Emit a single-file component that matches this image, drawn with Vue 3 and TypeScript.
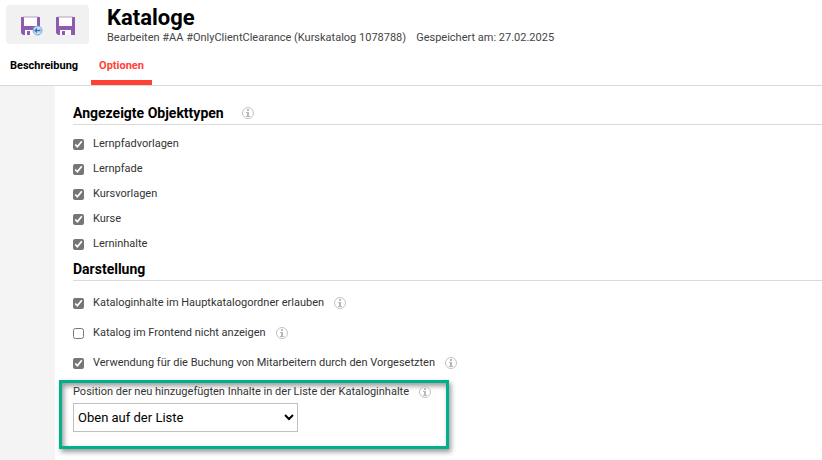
<script setup lang="ts">
import { ref, h } from 'vue'

interface Option {
  id: string
  label: string
  checked: boolean
}

const objectTypes = ref<Option[]>([
  { id: 'path-templates', label: 'Lernpfadvorlagen', checked: true },
  { id: 'paths', label: 'Lernpfade', checked: true },
  { id: 'course-templates', label: 'Kursvorlagen', checked: true },
  { id: 'courses', label: 'Kurse', checked: true },
  { id: 'contents', label: 'Lerninhalte', checked: true },
])

const displayOptions = ref<Option[]>([
  { id: 'root-contents', label: 'Kataloginhalte im Hauptkatalogordner erlauben', checked: true },
  { id: 'hide-frontend', label: 'Katalog im Frontend nicht anzeigen', checked: false },
  { id: 'manager-booking', label: 'Verwendung für die Buchung von Mitarbeitern durch den Vorgesetzten', checked: true },
])

const position = ref('top')

const InfoIcon = () =>
  h('svg', { class: 'info', width: 12, height: 12, viewBox: '0 0 12 12', 'aria-hidden': 'true' }, [
    h('circle', { cx: 6, cy: 6, r: 5.5, fill: 'none', stroke: '#c2c2c2' }),
    h('path', { d: 'M5 2h2v2H5zM4 5h3v4h1v1H4V9h1V6H4z', fill: '#b8b8b8' }),
  ])
</script>

<template>
  <div class="page">
    <header class="header">
      <div class="toolbar">
        <button type="button" class="tool" aria-label="Speichern und zurück">
          <svg width="22" height="22" viewBox="0 0 22 22">
            <path d="M0 1h19v18H2L0 17z" fill="#8e5bb0" />
            <path d="M3 1h13v9H3z" fill="#fff" />
            <path d="M2 0.500h15v1H2z" fill="#b99fcb" />
            <path d="M4 14h11v5H4z" fill="#fff" />
            <path d="M6 15h3v4H6z" fill="#8e5bb0" />
            <circle cx="16.500" cy="14.500" r="4.500" fill="#c5def2" stroke="#7ba8d3" />
            <path d="M13 14.500l3-2.700v1.900h3.500v1.600H16v1.900z" fill="#3d77b3" />
          </svg>
        </button>
        <button type="button" class="tool" aria-label="Speichern">
          <svg width="22" height="22" viewBox="0 0 22 22">
            <path d="M0 1h19v18H2L0 17z" fill="#8e5bb0" />
            <path d="M3 1h13v9H3z" fill="#fff" />
            <path d="M2 0.500h15v1H2z" fill="#b99fcb" />
            <path d="M4 14h11v5H4z" fill="#fff" />
            <path d="M6 15h3v4H6z" fill="#8e5bb0" />
          </svg>
        </button>
      </div>
      <div class="heading">
        <h1>Kataloge</h1>
        <p class="meta">
          <span>Bearbeiten #AA #OnlyClientClearance (Kurskatalog 1078788)</span>
          <span>Gespeichert am: 27.02.2025</span>
        </p>
      </div>
    </header>

    <nav class="tabs">
      <a href="#beschreibung" class="tab">Beschreibung</a>
      <a href="#optionen" class="tab active" aria-current="page">Optionen</a>
    </nav>

    <div class="body">
      <aside class="rail"></aside>
      <main class="content">
        <section>
          <h2>Angezeigte Objekttypen <InfoIcon /></h2>
          <div class="options types">
            <div v-for="o in objectTypes" :key="o.id" class="option">
              <input :id="o.id" v-model="o.checked" type="checkbox" />
              <label :for="o.id">{{ o.label }}</label>
            </div>
          </div>
        </section>
        <section>
          <h2>Darstellung</h2>
          <div class="options display">
            <div v-for="o in displayOptions" :key="o.id" class="option">
              <input :id="o.id" v-model="o.checked" type="checkbox" />
              <label :for="o.id">{{ o.label }}</label>
              <InfoIcon />
            </div>
          </div>
          <div class="highlight">
            <div class="field-label">
              <label for="position">Position der neu hinzugefügten Inhalte in der Liste der Kataloginhalte</label>
              <InfoIcon />
            </div>
            <select id="position" v-model="position">
              <option value="top">Oben auf der Liste</option>
              <option value="bottom">Unten auf der Liste</option>
            </select>
          </div>
        </section>
      </main>
    </div>
  </div>
</template>

<style>
body {
  margin: 0;
  background: #fff;
}
</style>

<style scoped>
.page {
  display: flex;
  flex-direction: column;
  min-height: 100vh;
  box-sizing: border-box;
  font-family: Roboto, "Liberation Sans", sans-serif;
  font-size: 11px;
  line-height: 14px;
  color: #333;
}
.header {
  display: flex;
  gap: 18px;
  padding: 5px 6px 0;
}
.toolbar {
  display: flex;
  gap: 13px;
  box-sizing: border-box;
  height: 39px;
  padding: 11px 11px 0 15px;
  border-radius: 4px;
  background: #f1f1f1;
}
.tool {
  width: 22px;
  height: 22px;
  padding: 0;
  border: 0;
  background: none;
}
.tool svg {
  display: block;
}
h1 {
  margin: 0;
  font-size: 22px;
  line-height: 26px;
  font-weight: 700;
  color: #000;
}
.meta {
  display: flex;
  gap: 10px;
  margin: 0;
  color: #444;
}
.tabs {
  display: flex;
  gap: 5px;
  padding: 0 2px;
  border-bottom: 1px solid #dadada;
}
.tab {
  box-sizing: border-box;
  height: 40px;
  padding: 14px 8px 0;
  border-bottom: 5px solid transparent;
  font-weight: 700;
  color: #000;
  text-decoration: none;
}
.tab.active {
  border-bottom-color: #ff4136;
  color: #ff4136;
}
.body {
  display: flex;
  flex: 1;
}
.rail {
  flex: 0 0 55px;
  background: #f4f4f4;
}
.content {
  flex: 1;
  padding: 17px 0 11px 18px;
}
h2 {
  display: flex;
  align-items: center;
  gap: 18px;
  margin: 0;
  padding-bottom: 1px;
  border-bottom: 1px solid #dadada;
  font-size: 14px;
  line-height: 20px;
  font-weight: 700;
  color: #000;
}
.options {
  display: flex;
  flex-direction: column;
}
.types {
  gap: 11px;
  padding: 12px 0 8px;
}
.display {
  gap: 16px;
  padding: 15px 0 10px;
}
.option {
  display: flex;
  align-items: center;
}
.option input {
  width: 11px;
  height: 11px;
  margin: 1px 9px 0 0;
  accent-color: #767676;
}
.info {
  display: block;
  flex: none;
}
.option .info,
.field-label .info {
  margin-left: 10px;
}
.highlight {
  box-sizing: border-box;
  width: 390px;
  max-width: 100%;
  margin-left: -14px;
  padding: 2px 11px 14px;
  border: 3px solid #00b08c;
  box-shadow: 2px 3px 5px rgba(0, 0, 0, 0.4), inset 2px 3px 5px rgba(0, 0, 0, 0.4);
}
.field-label {
  display: flex;
  align-items: center;
  margin-bottom: 4px;
}
select {
  display: block;
  width: 225px;
  height: 29px;
  padding: 0;
  border: 1px solid #bfbfbf;
  border-radius: 0;
  background-color: #fff;
  font-family: inherit;
  font-size: 13px;
  color: #000;
}
</style>
